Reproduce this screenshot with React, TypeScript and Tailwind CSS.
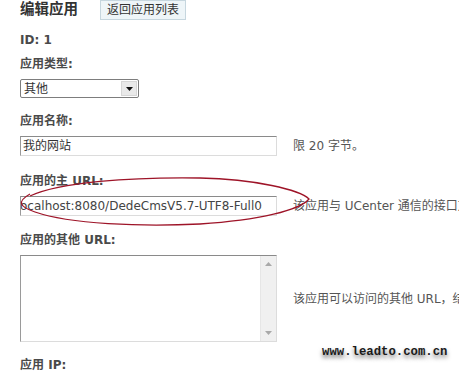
import React from 'react';

const sans = "font-['DejaVu_Sans','Noto_Sans_CJK_SC',sans-serif]";

const Label: React.FC<{ text: string; className?: string }> = ({ text, className = '' }) => (
    <div className={`h-[16px] leading-[16px] text-[12px] font-bold text-[#4a4a4a] whitespace-nowrap ${className}`}>{text}</div>
);

const Hint: React.FC<{ text: string }> = ({ text }) => (
    <div className="ml-[16px] shrink-0 text-[12px] leading-[16px] text-[#555] whitespace-nowrap">{text}</div>
);

const inputBox = 'shrink-0 border border-t-[#8a8a8a] border-l-[#9a9a9a] border-r-[#dcdcdc] border-b-[#dcdcdc] bg-white';

const App: React.FC = () => {
    return (
        <div className={`relative w-[459px] h-[373px] overflow-hidden bg-white pl-[20px] ${sans}`}>
            <div className="flex items-start h-[20px]">
                <h2 className="w-[80px] mt-[1px] text-[14.5px] leading-[16px] font-bold text-[#333]">编辑应用</h2>
                <button className="h-[20px] px-[6px] border border-[#c6d6de] bg-[#eef5f8] text-[12px] leading-[18px] text-[#333]">返回应用列表</button>
            </div>

            <Label text="ID: 1" className="mt-[12px]" />

            <Label text="应用类型:" className="mt-[8px]" />
            <div className="mt-[7px] w-[119px] h-[19px] flex items-center border border-[#7d7d7d] rounded-[2px] bg-white">
                <span className="flex-1 pl-[3px] text-[12px] leading-[16px] text-[#333]">其他</span>
                <span className="w-[16px] h-[15px] mr-[1px] flex items-center justify-center bg-[#e9e9e9] border border-[#d6d6d6]">
                    <svg width="7" height="4" viewBox="0 0 7 4"><path d="M0 0 L7 0 L3.5 4 Z" fill="#111" /></svg>
                </span>
            </div>

            <Label text="应用名称:" className="mt-[15px]" />
            <div className="mt-[7px] flex items-center">
                <div className={`w-[257px] h-[20px] ${inputBox} pl-[2px] text-[12px] leading-[18px] text-[#333]`}>我的网站</div>
                <Hint text="限 20 字节。" />
            </div>

            <Label text="应用的主 URL:" className="mt-[17px]" />
            <div className="mt-[7px] flex items-center">
                <div className={`w-[257px] h-[20px] ${inputBox} overflow-hidden whitespace-nowrap text-[12px] leading-[18px] text-[#444]`}>
                    <span className="-ml-[1px]">ocalhost:8080/DedeCmsV5.7-UTF8-Full0</span>
                </div>
                <Hint text="该应用与 UCenter 通信的接口文件名称" />
            </div>

            <Label text="应用的其他 URL:" className="mt-[16px]" />
            <div className="mt-[7px] flex items-center">
                <div className={`w-[257px] h-[87px] ${inputBox} flex justify-end`}>
                    <div className="w-[16px] h-full bg-[#f0f0f0] border-l border-[#e6e6e6] flex flex-col items-center justify-between py-[6px]">
                        <svg width="7" height="4" viewBox="0 0 7 4"><path d="M0 4 L7 4 L3.5 0 Z" fill="#a9a9a9" /></svg>
                        <svg width="7" height="4" viewBox="0 0 7 4"><path d="M0 0 L7 0 L3.5 4 Z" fill="#a9a9a9" /></svg>
                    </div>
                </div>
                <Hint text="该应用可以访问的其他 URL，结尾请不要加“/”" />
            </div>

            <Label text="应用 IP:" className="mt-[15px]" />

            <svg className="absolute inset-0 pointer-events-none" width="459" height="373" viewBox="0 0 459 373">
                <path
                    d="M 30 196 C 60 182, 130 177, 200 178 C 255 179, 300 190, 309 199 C 300 210, 260 220, 200 224 C 140 227, 70 224, 35 212 C 20 207, 16 202, 30 194"
                    fill="none"
                    stroke="#9e1428"
                    strokeWidth="1.3"
                />
            </svg>

            <div className="absolute left-[322px] top-[344px] font-['Liberation_Mono',monospace] font-bold text-[12.3px] leading-[16px] text-[#1a1a1a] [text-shadow:0_3px_4px_rgba(0,0,0,0.55)]">
                www.leadto.com.cn
            </div>
        </div>
    );
};

export default App;
